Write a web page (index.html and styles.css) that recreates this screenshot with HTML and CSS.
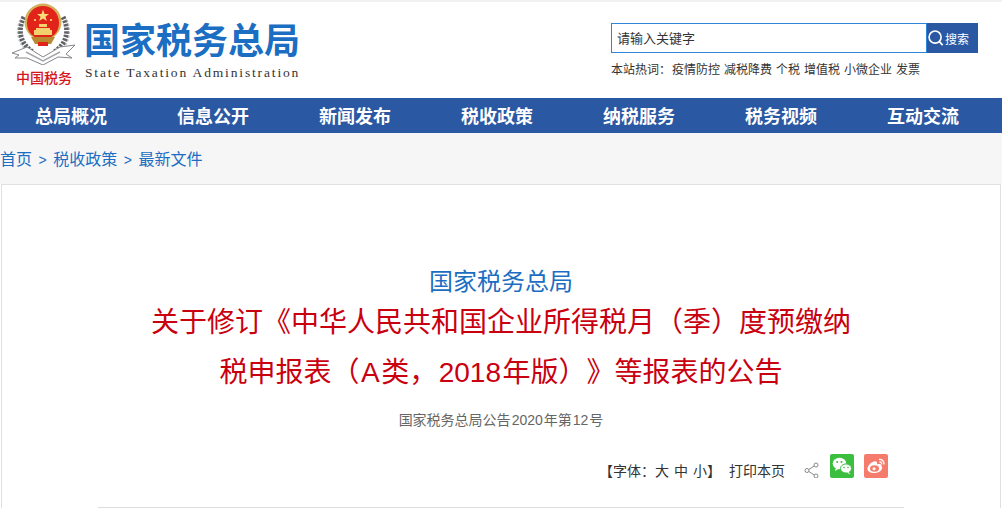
FILE: index.html
```html
<!DOCTYPE html>
<html lang="zh-CN">
<head>
    <meta charset="UTF-8">
    <title>国家税务总局</title>
    <link rel="stylesheet" href="styles.css">
</head>
<body>

<div class="header">
    <div class="emblem">
        <svg width="68" height="62" viewBox="10 3 68 62">
            <!-- wreath -->
            <g fill="none" stroke="#5f6164" stroke-width="5" stroke-dasharray="2.500 1.200">
                <path d="M24 17C17 30 20 44 33 52"/>
                <path d="M63 17C70 30 67 44 54 52"/>
            </g>
            <g fill="none" stroke="#b9bbbe" stroke-width="1.500" stroke-dasharray="2 2">
                <path d="M20 20C15 32 18 44 27 51"/>
                <path d="M67 20C72 32 69 44 60 51"/>
            </g>
            <!-- ribbon -->
            <path d="M12 53L27 47L43 57L60 47L75 45L66 54L72 58L58 57L43 65L27 58L15 58L19 55Z" fill="#fff" stroke="#85878a" stroke-width="1"/>
            <path d="M26 52L43 61L60 52" fill="none" stroke="#a5a7aa" stroke-width="1.500"/>
            <!-- shield -->
            <circle cx="43" cy="22" r="18.500" fill="#d4b05a"/>
            <path d="M43 6C34 6 27 13 27 23C27 33 34 39 43 39C52 39 59 33 59 23C59 13 52 6 43 6Z" fill="#e2231a"/>
            <path d="M43 9.500L44.500 14H49L45.400 16.800L46.800 21L43 18.400L39.200 21L40.600 16.800L37 14H41.500Z" fill="#f6df7a"/>
            <circle cx="35" cy="20" r="1.100" fill="#f6df7a"/>
            <circle cx="51" cy="20" r="1.100" fill="#f6df7a"/>
            <path d="M36 28H50V30H52V35H34V30H36ZM39 24H47V27H39Z" fill="#f3d06e"/>
            <path d="M31 37H55L51 44H35Z" fill="#b8892f"/>
            <path d="M38 42H48V46H38Z" fill="#e2231a"/>
        </svg>
        <div class="emblem-text">中国税务</div>
    </div>
    <div class="site-name">
        <div class="site-cn">国家税务总局</div>
        <div class="site-en">State Taxation Administration</div>
    </div>
    <div class="search">
        <div class="search-row">
            <div class="search-input">请输入关键字</div>
            <div class="search-btn">
                <svg width="16" height="16" viewBox="0 0 18 18">
                    <circle cx="8" cy="8" r="6.800" fill="none" stroke="#fff" stroke-width="1.800"/>
                    <path d="M12.800 13L16.500 17" stroke="#fff" stroke-width="2"/>
                </svg>
                <span>搜索</span>
            </div>
        </div>
        <div class="hot"><span class="hot-label">本站热词：</span><a>疫情防控</a><a>减税降费</a><a>个税</a><a>增值税</a><a>小微企业</a><a>发票</a></div>
    </div>
</div>

<div class="nav">
    <a>总局概况</a>
    <a>信息公开</a>
    <a>新闻发布</a>
    <a>税收政策</a>
    <a>纳税服务</a>
    <a>税务视频</a>
    <a>互动交流</a>
</div>

<div class="crumb">
    <a>首页</a><span class="sep">&gt;</span><a>税收政策</a><span class="sep">&gt;</span><a>最新文件</a>
</div>

<div class="card">
    <div class="doc-from">国家税务总局</div>
    <h1 class="doc-title">关于修订《中华人民共和国企业所得税月（季）度预缴纳<br>税申报表（<span class="latin">A</span>类，<span class="latin">2018</span>年版）》等报表的公告</h1>
    <div class="doc-no">国家税务总局公告<span class="num">2020</span>年第<span class="num">12</span>号</div>
    <div class="tools">
        <span class="font-size">【字体：<a>大</a><a>中</a><a>小</a>】</span>
        <a class="print">打印本页</a>
        <svg class="share" width="16" height="16" viewBox="0 0 16 16">
            <g fill="none" stroke="#8a8a8a" stroke-width="1">
                <circle cx="12" cy="3" r="2"/>
                <circle cx="3" cy="8.500" r="2"/>
                <circle cx="12" cy="14" r="2"/>
                <path d="M4.800 7.500L10.200 4M4.800 9.500L10.200 13"/>
            </g>
        </svg>
        <svg class="wechat" width="24" height="24" viewBox="0 0 24 24">
            <rect width="24" height="24" rx="2" fill="#3cbf3f"/>
            <ellipse cx="9.500" cy="9.500" rx="6.800" ry="5.800" fill="#fff"/>
            <path d="M6 13.500L5 17L9 14.800Z" fill="#fff"/>
            <ellipse cx="16" cy="14.500" rx="5.500" ry="4.600" stroke="#3cbf3f" stroke-width="1" fill="#fff"/>
            <path d="M18.500 18L20.500 20.500L17 18.800Z" fill="#fff"/>
            <circle cx="7.200" cy="8" r="1" fill="#3cbf3f"/>
            <circle cx="11.500" cy="8" r="1" fill="#3cbf3f"/>
            <circle cx="14" cy="13.500" r=".8" fill="#3cbf3f"/>
            <circle cx="18" cy="13.500" r=".8" fill="#3cbf3f"/>
        </svg>
        <svg class="weibo" width="24" height="24" viewBox="0 0 24 24">
            <rect width="24" height="24" rx="2" fill="#f57c6c"/>
            <path d="M3.500 15C3.500 11 9 6.500 12 7.500C13.500 8 13 10 13 10.500C15 9.800 17.500 9.800 17.500 12C19.500 14.500 16.500 19 10.500 19C6.500 19 3.500 17.500 3.500 15Z" fill="#fff"/>
            <ellipse cx="10.500" cy="14.500" rx="4.500" ry="3.300" fill="#f57c6c"/>
            <circle cx="10" cy="14.800" r="1.500" fill="#fff"/>
            <path d="M15 5.500C18 5 20.500 7.500 20 10.500M15.500 8C17 7.800 18 9 17.700 10.300" fill="none" stroke="#fff" stroke-width="1.300"/>
        </svg>
    </div>
    <div class="doc-rule"></div>
</div>

</body>
</html>
```

FILE: styles.css
```css
* { margin: 0; padding: 0; box-sizing: border-box; }

body { height: 100vh; overflow: hidden; background-color: #fff; font-family: "Liberation Sans", "Noto Sans CJK SC", sans-serif; color: #333; text-spacing-trim: space-all; }

h1 { font-weight: normal; }

/* header */
.header { height: 98px; padding: 3px 24px 0 10px; display: flex; align-items: flex-start; border-top: 2px solid #f1f1f1; }

.emblem { width: 68px; display: flex; flex-direction: column; align-items: center; }
.emblem svg { margin-top: -2px; }
.emblem-text { margin-top: 1px; font-size: 14px; line-height: 24px; font-weight: 500; color: #d4151c; white-space: nowrap; }

.site-name { margin: 16px 0 0 6px; width: 527px; }
.site-cn { font-size: 36px; line-height: 41px; font-weight: bold; color: #1b6ec2; white-space: nowrap; }
.site-en { margin: 3px 0 0 1px; font-family: "Liberation Serif", serif; font-size: 13.500px; line-height: 16px; letter-spacing: 1.850px; color: #333; white-space: nowrap; }

.search { margin-top: 18px; width: 367px; }
.search-row { display: flex; height: 30px; }
.search-input { width: 316px; height: 30px; padding-left: 5px; border: 1px solid #2f86d6; font-size: 13px; line-height: 29px; color: #333; }
.search-btn { width: 51px; background-color: #2a58a3; color: #fff; font-size: 12px; display: flex; align-items: center; gap: 1px; padding-left: 1px; }
.hot { margin-top: 9px; font-size: 12px; line-height: 16px; color: #333; white-space: nowrap; }
.hot-label { margin-right: 1px; }
.hot a { margin-right: 4px; }

/* nav */
.nav { height: 35px; background-color: #2a58a3; display: flex; }
.nav a { width: 142px; text-align: center; font-size: 18px; line-height: 38px; font-weight: bold; color: #fff; }

/* breadcrumb */
.crumb { height: 51px; background-color: #f6f6f6; font-size: 16px; line-height: 53px; color: #1b6ec2; white-space: nowrap; }
.crumb .sep { margin: 0 6.500px; font-size: 14px; }

/* article */
.card { height: 324px; margin: 0 1px; padding-top: 82px; background-color: #fff; border: 1px solid #e0e0e0; border-bottom: 0; text-align: center; }
.doc-from { font-size: 24px; line-height: 30px; color: #1b6ec2; }
.doc-title { margin-top: 1px; font-size: 28px; line-height: 50px; color: #c9000f; }
.doc-title .latin { margin: 0 1.500px; }
.doc-no { margin-top: 12px; font-size: 14px; line-height: 20px; color: #666; }
.doc-no .num { margin: 0 1px; }

.tools { margin-top: 24px; padding-right: 112px; height: 36px; display: flex; justify-content: flex-end; align-items: flex-start; font-size: 14px; line-height: 20px; color: #333; }
.font-size { margin-top: 7px; white-space: nowrap; }
.font-size a { margin-right: 5px; }
.font-size a:last-of-type { margin-right: 0; }
.print { margin: 7px 0 0 8px; }
.share { margin: 8px 0 0 19px; }
.wechat { margin-left: 10px; }
.weibo { margin-left: 10px; }

.doc-rule { margin: 17px 96px 0; border-top: 1px solid #ddd; }
```
